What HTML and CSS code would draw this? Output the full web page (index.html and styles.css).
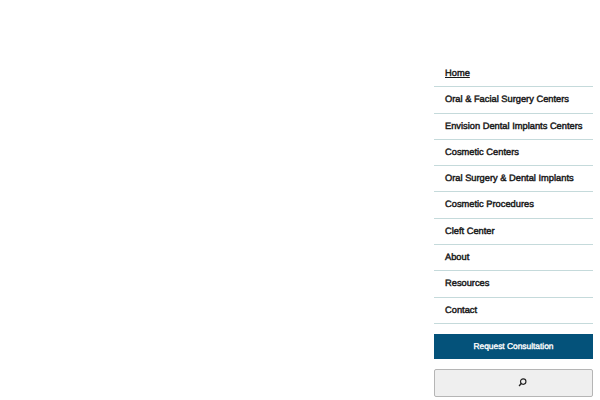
FILE: index.html
```html
<!DOCTYPE html>
<html lang="en">
<head>
<meta charset="utf-8">
<title>Menu</title>
<link rel="stylesheet" href="styles.css">
</head>
<body>
<aside class="panel">
<nav>
<ul class="menu">
<li><a class="current" href="#">Home</a></li>
<li><a href="#">Oral &amp; Facial Surgery Centers</a></li>
<li><a href="#">Envision Dental Implants Centers</a></li>
<li><a href="#">Cosmetic Centers</a></li>
<li><a href="#">Oral Surgery &amp; Dental Implants</a></li>
<li><a href="#">Cosmetic Procedures</a></li>
<li><a href="#">Cleft Center</a></li>
<li><a href="#">About</a></li>
<li><a href="#">Resources</a></li>
<li><a href="#">Contact</a></li>
</ul>
</nav>
<a class="cta" href="#">Request Consultation</a>
<button class="search" type="button" aria-label="Search">
<svg width="9" height="9" viewBox="0 0 10 10" aria-hidden="true"><circle cx="5.8" cy="4" r="3" fill="none" stroke="#222" stroke-width="1.3"/><path d="M3.6 6.2 1.2 8.8" stroke="#222" stroke-width="1.5" fill="none"/></svg>
</button>
</aside>
</body>
</html>
```
FILE: styles.css
```css
html, body {
  margin: 0;
  padding: 0;
  background: #fff;
}
body {
  height: 400px;
  overflow: hidden;
  display: flex;
  justify-content: flex-end;
  font-family: "Liberation Sans", Arial, sans-serif;
  text-rendering: geometricPrecision;
}
.panel {
  width: 159px;
  margin-right: 7px;
  padding-top: 61px;
}
.menu {
  list-style: none;
  margin: 0;
  padding: 0;
}
.menu li {
  height: 25.3px;
  border-bottom: 1px solid #c5dadb;
}
.menu a {
  display: block;
  padding-left: 11px;
  line-height: 25.6px;
  font-size: 9.3px;
  font-weight: 400;
  -webkit-text-stroke: 0.45px #1a1a1a;
  color: #1a1a1a;
  text-decoration: none;
  white-space: nowrap;
}
.menu a.current {
  text-decoration: underline;
}
.cta {
  display: block;
  margin-top: 10px;
  height: 25px;
  line-height: 25px;
  background: #04527a;
  color: #fff;
  font-size: 8.4px;
  -webkit-text-stroke: 0.35px #fff;
  text-align: center;
  text-decoration: none;
}
.search {
  display: flex;
  align-items: center;
  justify-content: center;
  width: 100%;
  height: 28px;
  margin-top: 10px;
  padding: 0 0 0 18px;
  background: #efefef;
  border: 1px solid #b5b5b5;
  border-radius: 2px;
}
```
